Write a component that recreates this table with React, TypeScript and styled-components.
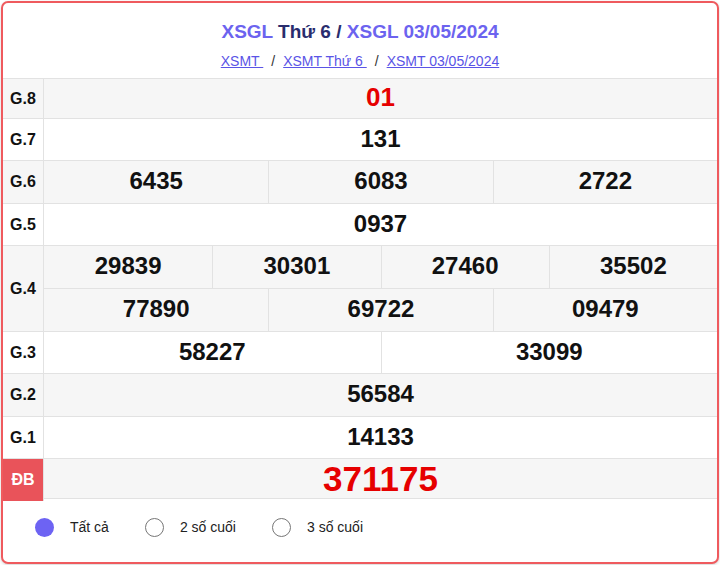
import React from "react";
import styled, { createGlobalStyle } from "styled-components";

const Global = createGlobalStyle`
  html, body { margin: 0; padding: 0; background: #ffffff; }
  body { font-family: "Liberation Sans", Arial, sans-serif; color: #111; }
  * { box-sizing: border-box; }
`;

const Card = styled.div`
  margin: 1px;
  width: 718px;
  height: 563px;
  border: 2px solid #ef5a5e;
  border-radius: 7px;
  background: #fff;
  box-shadow: 0 1px 3px rgba(0, 0, 0, 0.18);
  overflow: hidden;
  display: flex;
  flex-direction: column;
`;

const Header = styled.div`
  height: 75px;
  display: flex;
  flex-direction: column;
  align-items: center;
  padding-top: 17px;
`;

const Title = styled.h2`
  margin: 0;
  font-size: 19px;
  font-weight: 700;
  line-height: 24px;
  color: #2a2d6e;
`;

const TitleLink = styled.a`
  color: #6c63ef;
  text-decoration: none;
`;

const SubLinks = styled.div`
  margin-top: 8px;
  font-size: 14px;
  line-height: 18px;
  color: #333;
  display: flex;
  gap: 8px;
`;

const SubLink = styled.a`
  color: #5a54e6;
  text-decoration: underline;
  white-space: pre;
`;

const Table = styled.div`
  display: flex;
  flex-direction: column;
  border-bottom: 1px solid #e2e2e2;
`;

const Row = styled.div<{ $alt?: boolean; $h: number }>`
  display: grid;
  grid-template-columns: 41px 1fr;
  height: ${(p) => p.$h}px;
  border-top: 1px solid #e2e2e2;
  background: ${(p) => (p.$alt ? "#f6f6f6" : "#ffffff")};
`;

const Label = styled.div<{ $special?: boolean }>`
  display: flex;
  align-items: center;
  justify-content: center;
  border-right: 1px solid #e2e2e2;
  font-size: 16px;
  font-weight: 700;
  color: ${(p) => (p.$special ? "#ffffff" : "#111")};
  background: ${(p) => (p.$special ? "#e9535a" : "transparent")};
`;

const Data = styled.div`
  display: flex;
  flex-direction: column;
`;

const Line = styled.div<{ $cols: number; $top?: boolean }>`
  flex: 1;
  display: grid;
  grid-template-columns: repeat(${(p) => p.$cols}, 1fr);
  border-top: ${(p) => (p.$top ? "1px solid #e2e2e2" : "none")};
`;

const Num = styled.div<{ $red?: boolean; $size?: number }>`
  display: flex;
  align-items: center;
  justify-content: center;
  padding-bottom: 2px;
  font-size: ${(p) => p.$size ?? 24}px;
  font-weight: 700;
  color: ${(p) => (p.$red ? "#e60000" : "#111")};
  & + & { border-left: 1px solid #e2e2e2; }
`;

const Options = styled.div`
  flex: 1;
  display: flex;
  align-items: center;
  padding-left: 32px;
  padding-bottom: 7px;
  gap: 36px;
`;

const Option = styled.label`
  display: flex;
  align-items: center;
  gap: 16px;
  font-size: 14px;
  color: #222;
`;

const Dot = styled.span<{ $on?: boolean }>`
  width: 19px;
  height: 19px;
  border-radius: 50%;
  background: ${(p) => (p.$on ? "#6d63f3" : "#fff")};
  border: ${(p) => (p.$on ? "none" : "1px solid #767676")};
`;

type Prize = { label: string; lines: string[][]; alt?: boolean; h: number; red?: boolean; size?: number; special?: boolean };

const prizes: Prize[] = [
  { label: "G.8", lines: [["01"]], alt: true, h: 40, red: true, size: 26 },
  { label: "G.7", lines: [["131"]], h: 42 },
  { label: "G.6", lines: [["6435", "6083", "2722"]], alt: true, h: 43 },
  { label: "G.5", lines: [["0937"]], h: 42 },
  { label: "G.4", lines: [["29839", "30301", "27460", "35502"], ["77890", "69722", "09479"]], alt: true, h: 86 },
  { label: "G.3", lines: [["58227", "33099"]], h: 42 },
  { label: "G.2", lines: [["56584"]], alt: true, h: 43 },
  { label: "G.1", lines: [["14133"]], h: 42 },
  { label: "ĐB", lines: [["371175"]], alt: true, h: 40, red: true, size: 35, special: true },
];

export default function App() {
  return (
    <>
      <Global />
      <Card>
        <Header>
          <Title>
            <TitleLink href="#">XSGL</TitleLink> Thứ 6 / <TitleLink href="#">XSGL 03/05/2024</TitleLink>
          </Title>
          <SubLinks>
            <SubLink href="#">XSMT </SubLink>
            <span>/</span>
            <SubLink href="#">XSMT Thứ 6 </SubLink>
            <span>/</span>
            <SubLink href="#">XSMT 03/05/2024</SubLink>
          </SubLinks>
        </Header>
        <Table>
          {prizes.map((p) => (
            <Row key={p.label} $alt={p.alt} $h={p.h}>
              <Label $special={p.special}>{p.label}</Label>
              <Data>
                {p.lines.map((line, i) => (
                  <Line key={i} $cols={line.length} $top={i > 0}>
                    {line.map((n) => (
                      <Num key={n} $red={p.red} $size={p.size}>
                        {n}
                      </Num>
                    ))}
                  </Line>
                ))}
              </Data>
            </Row>
          ))}
        </Table>
        <Options>
          <Option>
            <Dot $on />
            Tất cả
          </Option>
          <Option>
            <Dot />2 số cuối
          </Option>
          <Option>
            <Dot />3 số cuối
          </Option>
        </Options>
      </Card>
    </>
  );
}
